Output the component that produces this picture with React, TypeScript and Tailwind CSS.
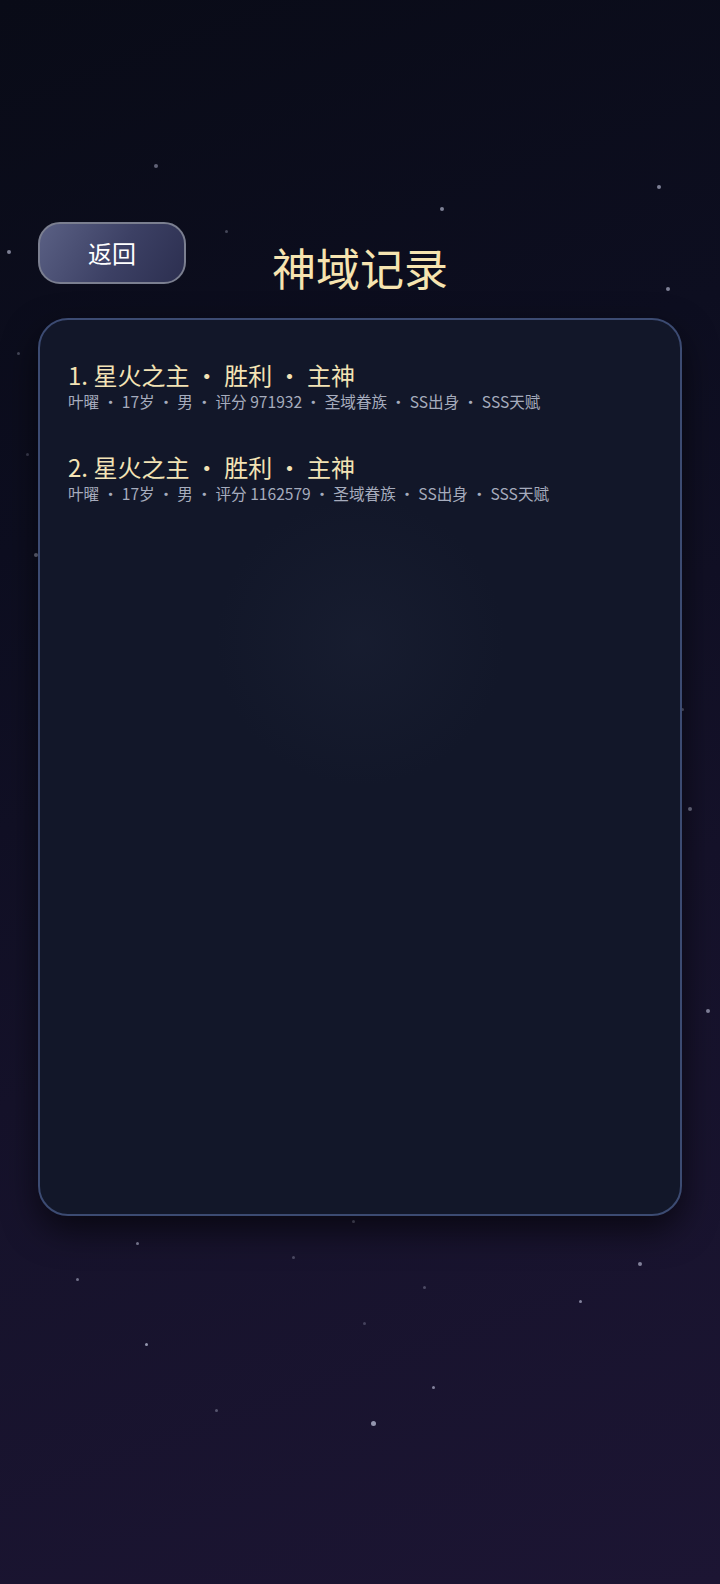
import React from "react";

type Record = {
  rank: number;
  title: string;
  result: string;
  role: string;
  name: string;
  age: number;
  gender: string;
  score: number;
  race: string;
  origin: string;
  talent: string;
};

const records: Record[] = [
  {
    rank: 1,
    title: "星火之主",
    result: "胜利",
    role: "主神",
    name: "叶曜",
    age: 17,
    gender: "男",
    score: 971932,
    race: "圣域眷族",
    origin: "SS出身",
    talent: "SSS天赋",
  },
  {
    rank: 2,
    title: "星火之主",
    result: "胜利",
    role: "主神",
    name: "叶曜",
    age: 17,
    gender: "男",
    score: 1162579,
    race: "圣域眷族",
    origin: "SS出身",
    talent: "SSS天赋",
  },
];

// background star field: x, y, size, opacity
const stars: [number, number, number, number][] = [
  [156, 166, 4, 0.45],
  [659, 187, 4, 0.6],
  [442, 209, 4, 0.6],
  [9, 252, 4, 0.6],
  [226, 231, 3, 0.3],
  [668, 289, 4, 0.6],
  [18, 353, 3, 0.3],
  [235, 331, 3, 0.2],
  [27, 454, 3, 0.25],
  [36, 555, 4, 0.5],
  [682, 709, 3, 0.4],
  [690, 809, 4, 0.5],
  [708, 1011, 4, 0.6],
  [353, 1221, 3, 0.4],
  [137, 1243, 3, 0.6],
  [293, 1257, 3, 0.3],
  [640, 1264, 4, 0.6],
  [77, 1279, 3, 0.5],
  [424, 1287, 3, 0.3],
  [580, 1301, 3, 0.6],
  [364, 1323, 3, 0.25],
  [146, 1344, 3, 0.7],
  [433, 1387, 3, 0.6],
  [216, 1410, 3, 0.35],
  [373, 1423, 5, 0.7],
];

const font = { fontFamily: '"Noto Sans CJK SC", "Noto Sans", sans-serif' };

function RecordRow({ r }: { r: Record }) {
  return (
    <div className="flex flex-col">
      <div className="text-[24px] leading-[32px] text-[#f3e3b5]">
        {r.rank}. {r.title} • {r.result} • {r.role}
      </div>
      <div className="text-[15.6px] leading-[20px] text-[#a6acbd]">
        {r.name} · {r.age}岁 · {r.gender} · 评分 {r.score} · {r.race} · {r.origin} · {r.talent}
      </div>
    </div>
  );
}

export default function App() {
  return (
    <div
      className="relative min-h-[1584px] w-full overflow-hidden bg-[linear-gradient(160deg,#090b17_0%,#0d0e20_30%,#15122a_60%,#1c1533_100%)]"
      style={font}
    >
      {stars.map(([x, y, s, o], i) => (
        <span
          key={i}
          className="absolute rounded-full bg-[#c9cde6]"
          style={{ left: x - s / 2, top: y - s / 2, width: s, height: s, opacity: o }}
        />
      ))}

      <div className="relative px-[38px] pt-[222px]">
        {/* header */}
        <div className="grid grid-cols-[148px_1fr_148px] items-start">
          <button className="h-[62px] w-[148px] rounded-[22px] border-2 border-[#7b7f90] bg-[linear-gradient(120deg,#5a6084_0%,#3c4064_55%,#2c2f50_100%)] text-[24px] text-white">
            返回
          </button>
          <h1 className="mt-[23px] text-center text-[44px] leading-[44px] text-[#f6e4b0]">神域记录</h1>
          <div />
        </div>

        {/* records card */}
        <div className="mt-[29px] h-[898px] rounded-[30px] border-2 border-[#3c4b72] bg-[#121729] bg-[radial-gradient(circle_at_50%_36%,rgba(34,41,62,0.3)_0%,rgba(18,23,41,0)_22%)] px-[28px] pt-[39px] shadow-[0_14px_34px_rgba(0,0,0,0.6)]">
          <div className="flex flex-col gap-[40px]">
            {records.map((r) => (
              <RecordRow key={r.rank} r={r} />
            ))}
          </div>
        </div>
      </div>
    </div>
  );
}
